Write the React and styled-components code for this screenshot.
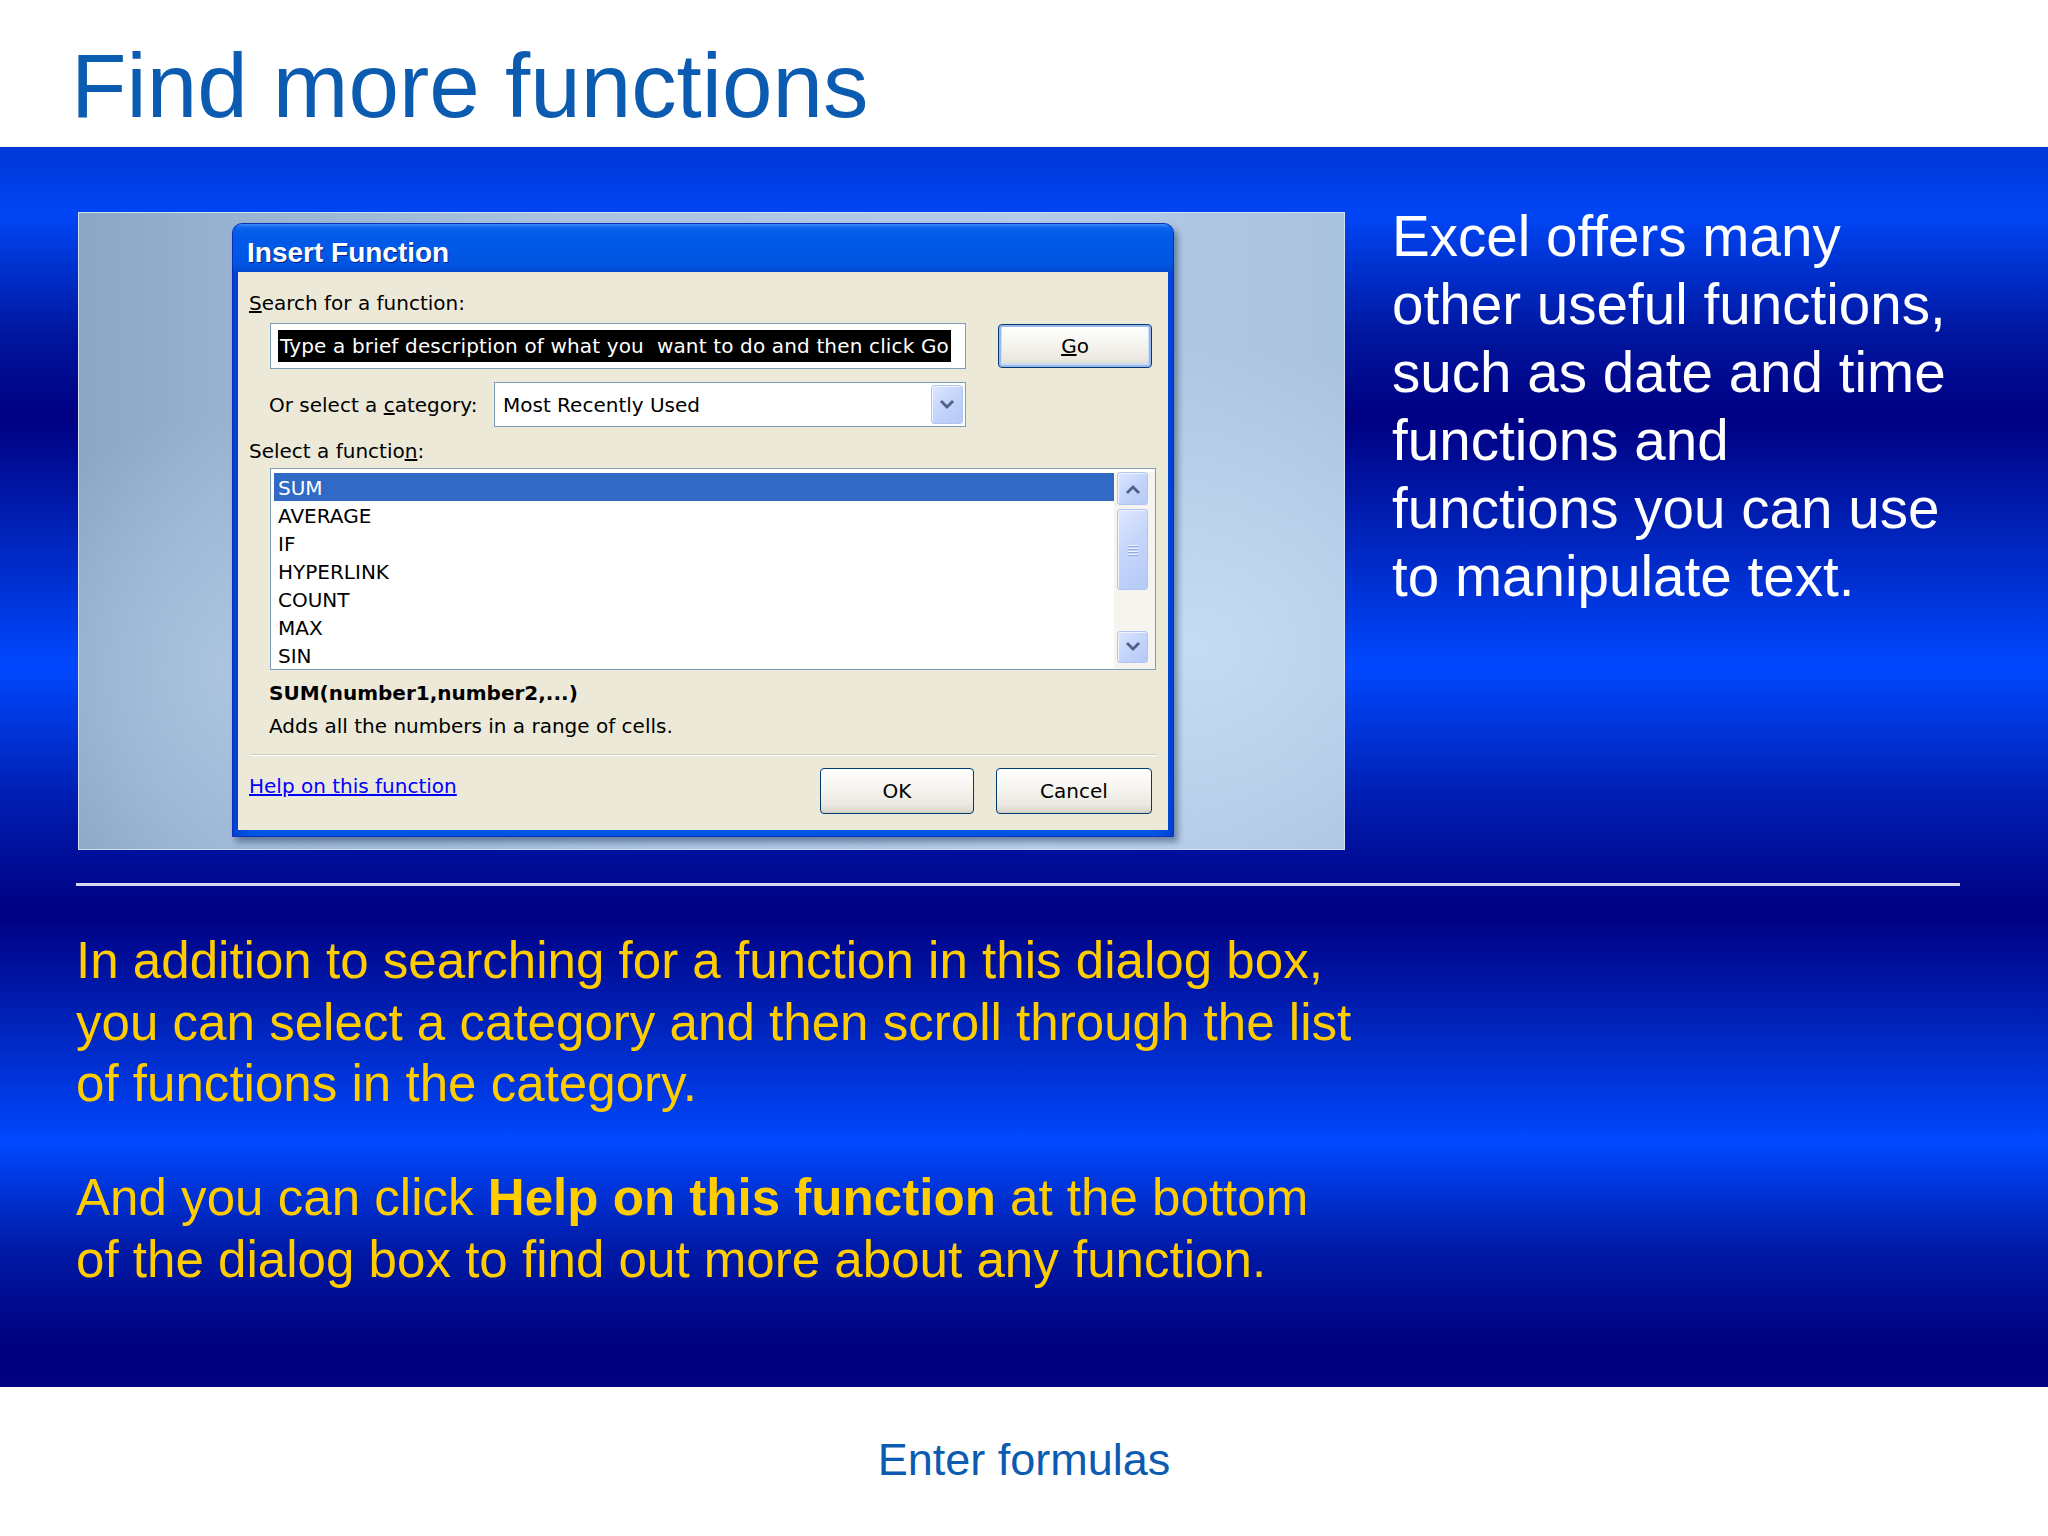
import React from "react";
import styled, { createGlobalStyle } from "styled-components";

const Global = createGlobalStyle`
  html, body { margin: 0; padding: 0; background: #ffffff; }
  body { width: 2048px; height: 1536px; overflow: hidden; }
`;

const Slide = styled.div`
  width: 2048px;
  height: 1536px;
  display: flex;
  flex-direction: column;
  font-family: "Liberation Sans", Arial, sans-serif;
  overflow: hidden;
`;

const Header = styled.header`
  height: 147px;
  flex-shrink: 0;
  box-sizing: border-box;
  padding: 41px 0 0 71px;
  background: #ffffff;
`;

const Title = styled.h1`
  margin: 0;
  font-size: 90.8px;
  line-height: 90px;
  font-weight: 400;
  color: #0b5bb0;
  white-space: nowrap;
`;

const Band = styled.main`
  height: 1240px;
  flex-shrink: 0;
  box-sizing: border-box;
  padding-top: 56px;
  display: flex;
  flex-direction: column;
  background: linear-gradient(
    to bottom,
    #0036d6 0%,
    #0046f5 5.5%,
    #00169f 15%,
    #000082 21.8%,
    #0022b8 31%,
    #0048ff 41.9%,
    #0020b4 52%,
    #000082 61.7%,
    #0024bc 71%,
    #0048ff 80.2%,
    #001aa6 89%,
    #00007e 96.7%,
    #000080 100%
  );
`;

const TopRow = styled.section`
  display: flex;
  align-items: flex-start;
  padding-left: 78px;
`;

const Shot = styled.div`
  margin-top: 9px;
  width: 1267px;
  height: 638px;
  flex-shrink: 0;
  box-sizing: border-box;
  border: 1px solid #d3dfee;
  padding: 10px 0 0 153px;
  overflow: hidden;
  background:
    radial-gradient(ellipse 420px 300px at 88% 68%, rgba(202, 224, 247, 0.85) 0%, rgba(202, 224, 247, 0) 100%),
    radial-gradient(ellipse 300px 260px at 14% 72%, rgba(178, 202, 230, 0.8) 0%, rgba(178, 202, 230, 0) 100%),
    linear-gradient(to right, #8ba6c4 0%, #98b3d1 12%, #aac4e0 40%, #b3cbe7 75%, #a9c2de 100%);
`;

const SideText = styled.p`
  margin: 0 0 0 47px;
  font-size: 56.6px;
  line-height: 68px;
  color: #ffffff;
  white-space: nowrap;
`;

const Rule = styled.div`
  margin: 33px 0 0 76px;
  width: 1884px;
  height: 3px;
  background: #d6d6f6;
`;

const Notes = styled.section`
  padding-left: 76px;
  margin-top: 44px;
  font-size: 51.1px;
  line-height: 61.5px;
  color: #ffcc00;
`;

const Para = styled.p`
  margin: ${(p) => (p.$first ? "0" : "52.5px 0 0")};
  white-space: nowrap;
  line-height: ${(p) => (p.$first ? "61.5px" : "62px")};
`;

const Footer = styled.footer`
  flex: 1;
  box-sizing: border-box;
  padding-top: 50px;
  text-align: center;
  font-size: 45px;
  line-height: 45px;
  color: #0b5bb0;
  background: #ffffff;
`;

/* ---------- XP dialog ---------- */

const Dialog = styled.div`
  width: 942px;
  display: flex;
  flex-direction: column;
  box-sizing: border-box;
  border-radius: 10px 10px 0 0;
  background: linear-gradient(to right, #0041d0, #0055e5 2%, #0055e5 98%, #0041d0);
  box-shadow: 4px 5px 6px rgba(20, 40, 80, 0.45);
  border: 1px solid #0a2fb8;
`;

const TitleBar = styled.div`
  height: 48px;
  box-sizing: border-box;
  padding: 15px 0 0 14px;
  border-radius: 9px 9px 0 0;
  background: linear-gradient(
    to bottom,
    #3d8ef8 0%,
    #0a62ee 8%,
    #0059e7 30%,
    #0058e6 60%,
    #0054de 88%,
    #0047cc 100%
  );
  font-family: "Liberation Sans", Arial, sans-serif;
  font-weight: 700;
  font-size: 28px;
  line-height: 28px;
  color: #ffffff;
  text-shadow: 1px 1px 0 #0b1f8a;
`;

const Body = styled.div`
  margin: 0 5px 6px;
  background: #ece9d8;
  box-sizing: border-box;
  padding: 19px 12px 16px 11px;
  display: flex;
  flex-direction: column;
  font-family: "DejaVu Sans", Tahoma, sans-serif;
  font-size: 20px;
  line-height: 24px;
  color: #000000;
  white-space: nowrap;
`;

const Label = styled.div`
  margin: ${(p) => p.$m || "0"};
`;

const Row = styled.div`
  display: flex;
  align-items: center;
  margin-top: ${(p) => p.$mt}px;
  padding-left: ${(p) => p.$pl || 0}px;
`;

const SearchBox = styled.div`
  width: 696px;
  height: 46px;
  box-sizing: border-box;
  border: 1px solid #7f9db9;
  background: #ffffff;
  display: flex;
  align-items: center;
  padding-left: 7px;
`;

const Selected = styled.span`
  background: #000000;
  color: #ffffff;
  line-height: 32px;
  padding: 0 2px;
  letter-spacing: 0.15px;
  white-space: pre;
`;

const XPButton = styled.div`
  width: ${(p) => p.$w}px;
  height: ${(p) => p.$h}px;
  margin-left: ${(p) => p.$ml || 0}px;
  box-sizing: border-box;
  border: 1px solid #003c74;
  border-radius: 4px;
  background: linear-gradient(to bottom, #ffffff 0%, #f5f4ef 45%, #ebe9e1 80%, #d9d4c8 100%);
  box-shadow: ${(p) =>
    p.$default
      ? "inset 0 0 0 2px #9ab8ec, inset 0 -1px 0 3px #c9dcfa"
      : "inset 0 -2px 0 0 #d6d0c5"};
  display: flex;
  align-items: center;
  justify-content: center;
  flex-shrink: 0;
`;

const CatLabel = styled.div`
  width: 225px;
  flex-shrink: 0;
`;

const Combo = styled.div`
  width: 472px;
  height: 45px;
  box-sizing: border-box;
  border: 1px solid #7f9db9;
  background: #ffffff;
  display: flex;
  align-items: stretch;
  padding: 2px;
`;

const ComboText = styled.div`
  flex: 1;
  padding-left: 6px;
  display: flex;
  align-items: center;
`;

const BlueKey = styled.div`
  width: ${(p) => p.$w || 31}px;
  height: ${(p) => (p.$h ? p.$h + "px" : "auto")};
  flex-shrink: 0;
  box-sizing: border-box;
  border: 1px solid #b1c5f2;
  border-radius: 3px;
  background: linear-gradient(135deg, #dde7fe 0%, #c6d6fb 45%, #b5c9f7 100%);
  box-shadow: inset 1px 1px 0 #eef3ff;
  display: flex;
  align-items: center;
  justify-content: center;
`;

const ListBox = styled.div`
  margin: 5px 0 0 21px;
  width: 886px;
  height: 202px;
  box-sizing: border-box;
  border: 1px solid #7f9db9;
  background: #ffffff;
  padding: 4px 0 0 3px;
  display: flex;
  overflow: hidden;
`;

const Items = styled.div`
  flex: 1;
  display: flex;
  flex-direction: column;
`;

const Item = styled.div`
  height: 28px;
  line-height: 28px;
  padding: 1px 0 0 4px;
  box-sizing: border-box;
  background: ${(p) => (p.$sel ? "#316ac5" : "transparent")};
  color: ${(p) => (p.$sel ? "#ffffff" : "#000000")};
`;

const Scroll = styled.div`
  width: 41px;
  margin-top: -1px;
  box-sizing: border-box;
  padding: 0 6px 6px 3px;
  display: flex;
  flex-direction: column;
  gap: 4px;
  background: #f5f4ef;
`;

const Spacer = styled.div`
  flex: 1;
`;

const Sig = styled.div`
  margin: 11px 0 0 20px;
  font-weight: 700;
`;

const Etched = styled.div`
  margin: 16px 0 0 2px;
  width: 905px;
  height: 1px;
  background: #d0cdbf;
  border-bottom: 1px solid #ffffff;
`;

const ButtonRow = styled.div`
  margin-top: 12px;
  height: 46px;
  display: flex;
  align-items: flex-start;
  padding-right: 4px;
`;

const HelpLink = styled.a`
  flex: 1;
  margin-top: 6px;
  color: #0000ff;
  text-decoration: underline;
`;

const Chevron = ({ up }) => (
  <svg width="16" height="16" viewBox="0 0 16 16">
    <polyline
      points={up ? "3,11 8,6 13,11" : "3,5 8,10 13,5"}
      fill="none"
      stroke="#4d6185"
      strokeWidth="2.8"
      strokeLinecap="square"
    />
  </svg>
);

const Grip = () => (
  <svg width="12" height="12" viewBox="0 0 12 12">
    {[1.5, 4.5, 7.5, 10.5].map((y) => (
      <g key={y}>
        <line x1="1" y1={y} x2="11" y2={y} stroke="#eef3fe" strokeWidth="1" />
        <line x1="1" y1={y + 1} x2="11" y2={y + 1} stroke="#8faae6" strokeWidth="1" />
      </g>
    ))}
  </svg>
);

const functions = ["SUM", "AVERAGE", "IF", "HYPERLINK", "COUNT", "MAX", "SIN"];

const InsertFunctionDialog = () => (
  <Dialog>
    <TitleBar>Insert Function</TitleBar>
    <Body>
      <Label>
        <u>S</u>earch for a function:
      </Label>
      <Row $mt={8} $pl={21}>
        <SearchBox>
          <Selected>Type a brief description of what you  want to do and then click Go</Selected>
        </SearchBox>
        <XPButton $w={154} $h={44} $ml={32} $default>
          <span>
            <u>G</u>o
          </span>
        </XPButton>
      </Row>
      <Row $mt={13} $pl={20}>
        <CatLabel>
          Or select a <u>c</u>ategory:
        </CatLabel>
        <Combo>
          <ComboText>Most Recently Used</ComboText>
          <BlueKey $w={32}>
            <Chevron />
          </BlueKey>
        </Combo>
      </Row>
      <Label $m="12px 0 0">
        Select a functio<u>n</u>:
      </Label>
      <ListBox>
        <Items>
          {functions.map((f, i) => (
            <Item key={f} $sel={i === 0}>
              {f}
            </Item>
          ))}
        </Items>
        <Scroll>
          <BlueKey $h={33}>
            <Chevron up />
          </BlueKey>
          <BlueKey $h={81}>
            <Grip />
          </BlueKey>
          <Spacer />
          <BlueKey $h={32}>
            <Chevron />
          </BlueKey>
        </Scroll>
      </ListBox>
      <Sig>SUM(number1,number2,...)</Sig>
      <Label $m="9px 0 0 20px">Adds all the numbers in a range of cells.</Label>
      <Etched />
      <ButtonRow>
        <HelpLink>Help on this function</HelpLink>
        <XPButton $w={154} $h={46}>
          OK
        </XPButton>
        <XPButton $w={156} $h={46} $ml={22}>
          Cancel
        </XPButton>
      </ButtonRow>
    </Body>
  </Dialog>
);

export default function App() {
  return (
    <>
      <Global />
      <Slide>
        <Header>
          <Title>Find more functions</Title>
        </Header>
        <Band>
          <TopRow>
            <Shot>
              <InsertFunctionDialog />
            </Shot>
            <SideText>
              Excel offers many
              <br />
              other useful functions,
              <br />
              such as date and time
              <br />
              functions and
              <br />
              functions you can use
              <br />
              to manipulate text.
            </SideText>
          </TopRow>
          <Rule />
          <Notes>
            <Para $first>
              In addition to searching for a function in this dialog box,
              <br />
              you can select a category and then scroll through the list
              <br />
              of functions in the category.
            </Para>
            <Para>
              And you can click <b>Help on this function</b> at the bottom
              <br />
              of the dialog box to find out more about any function.
            </Para>
          </Notes>
        </Band>
        <Footer>Enter formulas</Footer>
      </Slide>
    </>
  );
}
